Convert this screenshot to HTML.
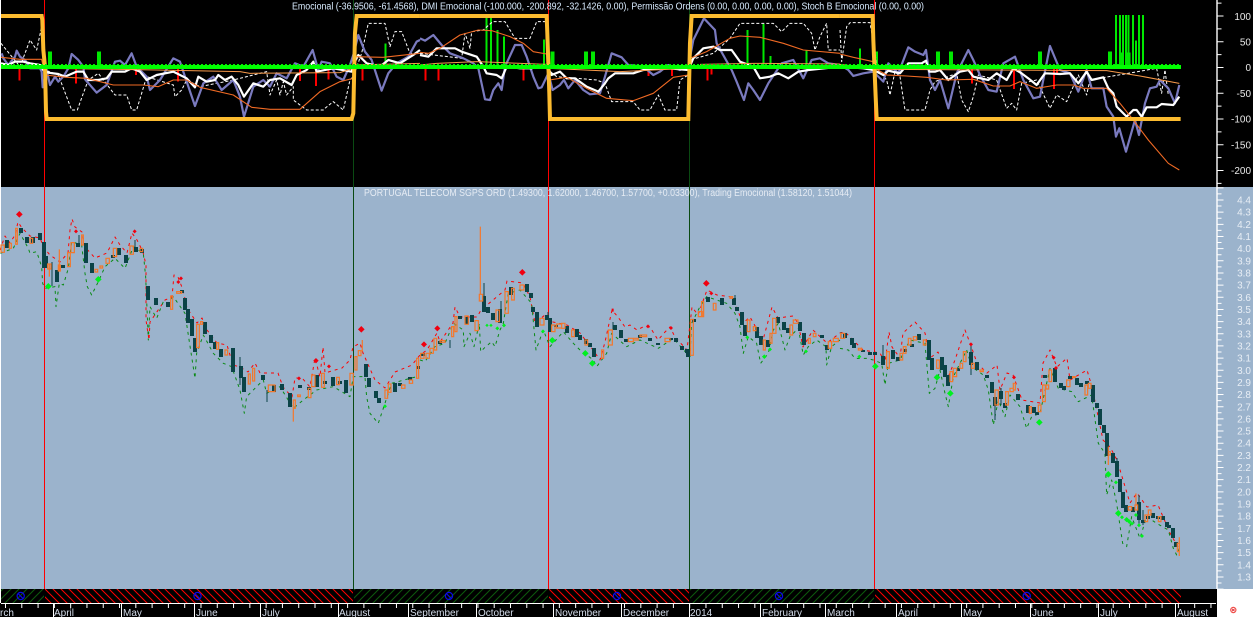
<!DOCTYPE html>
<html><head><meta charset="utf-8"><title>Chart</title>
<style>
html,body{margin:0;padding:0;background:#fff}
svg{display:block}
text{font-family:"Liberation Sans",sans-serif}
.n *{vector-effect:non-scaling-stroke}
.l{fill:none;stroke-linejoin:round}
.pa text{font-size:10px;fill:#e8eef5;text-anchor:end}
.ta text{font-size:10px;fill:#e8e8e8;text-anchor:end}
.m text{font-size:10px;fill:#d4dcea}
</style></head>
<body>
<svg width="1253" height="617" viewBox="0 0 1253 617" xmlns="http://www.w3.org/2000/svg">
<defs>
<pattern id="hr" width="8" height="8" patternUnits="userSpaceOnUse"><path d="M-1 -1L9 9M-1 7L1 9M7 -1L9 1" stroke="#f00" stroke-width="1"/></pattern>
<pattern id="hg" width="8" height="8" patternUnits="userSpaceOnUse"><path d="M-1 9L9 -1M-1 1L1 -1M7 9L9 7" stroke="#0c5a0c" stroke-width="1"/></pattern>
</defs>
<rect width="1253" height="617" fill="#fff"/>
<rect x="1" y="0" width="1252" height="187" fill="#000"/>
<rect x="1" y="187" width="1252" height="402" fill="#9bb3cc"/>
<rect x="1" y="589" width="1216" height="28" fill="#000"/>
<rect x="0" y="603" width="1" height="14" fill="#000"/>

<!-- vertical markers -->
<path d="M44.5 0V589M548.5 0V589M874.5 0V589" stroke="#f00" stroke-width="1"/>
<path d="M353.5 0V589M689.5 0V589" stroke="#0a4a12" stroke-width="1"/>

<!-- top pane: bars -->
<g class="n" shape-rendering="crispEdges">
<g transform="scale(.3333)">
<path d="M150 200V155M297 200V155" stroke="#00e800" stroke-width="4"/>
<path d="M1157 200V130" stroke="#00e800" stroke-width="2"/>
<path d="M58 207V242M228 207V250M408 207V225M534 207V245M900 207V243M948 207V258M986 207V238M1087 207V242" stroke="#f00" stroke-width="2"/>
</g>
<g transform="translate(420 0) scale(.3333)">
<path d="M398 200V155M498 200V155M519 200V155" stroke="#00e800" stroke-width="4"/>
<path d="M200 200V45M213 200V45" stroke="#00e800" stroke-width="2"/>
<path d="M233 200V90M252 200V110M372 200V118M983 200V90M1031 200V72M1052 200V168M1160 200V152" stroke="#00e800" stroke-width="2"/>
<path d="M16 207V242M55 207V242M310 207V242M686 207V228M756 207V228M862 207V242M875 207V223" stroke="#f00" stroke-width="2"/>
</g>
<g transform="translate(840 0) scale(.3333)">
<path d="M108 200V155M294 200V155M333 200V155M600 200V155M810 200V155M843 200V158M866 200V158" stroke="#00e800" stroke-width="4"/>
<path d="M828 200V45M840 200V45M849 200V45M858 200V45M866 200V45M879 200V45M897 200V45M909 200V45" stroke="#00e800" stroke-width="2"/>
<path d="M60 200V145M888 200V122" stroke="#00e800" stroke-width="2"/>
<path d="M396 207V250M522 207V267M642 207V267M651 207V225" stroke="#f00" stroke-width="2"/>
</g>
</g>
<g class="n">
<!-- white dashed -->
<g class="l" stroke="#fff" stroke-width="1" stroke-dasharray="3 2">
<polyline transform="scale(.3333)" points="3,130 60,200 90,120 110,150 125,80 135,200 135,210 175,225 215,330 232,330 250,280 265,240 295,220 345,285 380,285 395,330 410,330 440,230 520,255 525,290 545,270 560,240 600,260 700,240 800,215 810,285 830,240 840,285 850,245 860,285 880,260 880,300 920,330 970,330 975,325 1000,305 1030,330 1050,240 1060,230 1085,160 1105,70 1155,70 1170,140 1185,95 1205,95 1230,160 1260,160"/>
<polyline transform="translate(420 0) scale(.3333)" points="0,160 125,175 135,100 150,145 155,95 190,90 218,65 255,65 285,115 330,115 350,65 380,65 385,210 410,230 530,240 555,250 575,305 640,305 660,330 690,330 715,285 735,330 770,330 780,240 805,225 810,180 880,160 930,115 960,70 1060,70 1085,95 1110,70 1150,70 1175,100 1185,150 1200,110 1220,70 1225,150 1260,150"/>
<polyline transform="translate(840 0) scale(.3333)" points="0,90 5,185 20,80 30,68 90,68 105,155 110,205 140,240 150,285 165,215 180,230 195,330 255,330 270,270 285,245 350,220 365,300 385,335 400,290 415,225 470,240 500,325 515,310 530,330 545,250 590,240 630,325 650,285 680,305 715,225 740,285 750,240 950,205 965,280 975,210 985,285"/>
</g>

<!-- blue line -->
<g class="l" stroke="#7a7abf" stroke-width="2.2">
<polyline transform="scale(.3333)" points="5,160 10,175 25,195 45,170 50,152 60,170 75,180 90,205 120,205 125,215 128,262 140,210 150,255 165,230 175,245 190,230 205,205 215,162 235,180 250,200 255,238 290,278 320,255 345,185 360,182 375,195 395,160 410,200 440,230 450,270 480,240 520,175 540,185 555,230 585,318 610,250 640,230 665,270 700,240 720,290 732,350 760,260 790,240 810,260 830,220 860,235 885,190 910,200 938,150 955,210 965,185 990,190 1010,230 1030,240 1050,195 1060,165 1075,105 1095,155 1115,180 1145,272 1165,220 1190,190 1225,170 1250,125 1260,120"/>
<polyline transform="translate(420 0) scale(.3333)" points="0,115 15,122 40,105 65,135 90,160 130,175 160,190 175,205 195,298 210,300 220,270 235,250 245,270 255,200 285,135 305,135 320,170 340,230 355,265 365,262 385,220 398,270 420,255 432,240 445,265 465,240 490,270 510,283 540,280 555,230 575,160 605,172 625,195 670,200 700,225 720,215 745,195 780,210 805,200 820,120 852,55 885,90 890,130 935,210 950,245 972,300 985,250 1000,270 1020,300 1045,250 1085,190 1120,180 1150,235 1175,180 1200,175 1225,190 1260,195"/>
<polyline transform="translate(840 0) scale(.3333)" points="0,195 25,210 40,228 70,220 100,215 130,245 145,190 175,220 205,142 225,155 250,165 258,150 270,240 285,270 300,240 325,325 350,220 385,150 400,180 420,225 445,270 470,275 490,190 525,170 550,240 580,295 600,290 630,138 660,210 690,220 715,275 740,210 755,265 790,265 800,320 820,350 828,410 838,385 858,455 885,360 897,405 915,310 930,265 950,260 960,240 985,265 1005,310 1018,255"/>
</g>

<!-- white solid -->
<g class="l" stroke="#fff" stroke-width="2.2">
<polyline transform="scale(.3333)" points="3,190 25,195 45,185 70,185 90,190 120,195 130,210 145,218 175,222 195,230 230,215 250,215 265,240 295,240 320,235 335,215 375,215 395,205 420,215 440,240 470,225 520,215 560,235 585,262 595,230 620,245 645,240 655,225 675,240 695,230 715,255 732,290 760,250 790,260 810,240 840,235 875,255 890,225 920,210 940,185 950,215 1000,205 1055,215 1062,190 1075,165 1100,190 1140,200 1165,180 1200,190 1240,165 1260,150"/>
<polyline transform="translate(420 0) scale(.3333)" points="0,165 25,170 50,145 105,145 125,155 170,170 190,200 200,220 230,225 245,235 260,200 300,205 335,205 350,200 385,205 395,225 420,215 440,235 465,235 500,260 535,275 555,250 565,235 585,220 640,220 670,210 720,205 745,205 805,210 820,175 850,145 880,140 900,150 935,150 960,185 1000,200 1020,235 1050,230 1075,220 1105,235 1135,215 1165,210 1260,200"/>
<polyline transform="translate(840 0) scale(.3333)" points="0,200 70,205 100,210 130,225 145,212 180,220 205,190 245,190 258,182 268,215 285,215 300,210 325,240 360,215 385,210 400,230 445,240 470,220 500,240 520,205 545,220 565,235 590,255 615,220 660,222 690,220 715,250 740,215 755,240 790,232 805,265 820,280 830,320 860,350 880,330 890,330 905,350 920,322 950,322 965,312 1000,315 1018,290"/>
</g>

<!-- thin orange -->
<g class="l" stroke="#f06a24" stroke-width="1.1">
<polyline transform="scale(.3333)" points="3,172 60,178 125,178 135,225 200,232 260,235 340,255 385,255 430,255 475,260 520,240 560,240 600,262 700,285 755,322 810,328 900,328 960,275 1020,245 1060,235 1065,170 1150,172 1260,160"/>
<polyline transform="translate(420 0) scale(.3333)" points="0,157 25,160 60,145 120,105 175,90 215,92 270,110 310,130 340,155 380,162 388,240 440,232 500,265 560,295 640,302 700,280 760,232 805,225 810,175 860,155 930,115 960,108 1020,112 1090,130 1150,150 1260,160"/>
<polyline transform="translate(840 0) scale(.3333)" points="0,162 40,172 100,185 105,205 140,225 200,228 260,232 320,240 400,238 460,258 510,258 540,245 590,265 650,255 700,255 730,265 800,265 840,310 880,360 925,420 985,490 1018,510"/>
</g>
<g class="l" stroke="#f89a4a" stroke-width="1">
<path transform="scale(.3333)" d="M140 205L280 207 470 210 720 215 750 220 1020 218 1060 205M1065 195L1260 190"/>
<path transform="translate(420 0) scale(.3333)" d="M0 195L50 190 170 185 380 193M390 205L600 215 805 205M840 193L1000 190 1260 192"/>
<path transform="translate(840 0) scale(.3333)" d="M0 193L100 205M110 208L800 212 900 228 1018 250"/>
</g>
</g>

<!-- thick orange -->
<g fill="none" stroke="#fcbb2f" stroke-width="4" stroke-linejoin="miter" class="n">
<polyline transform="scale(.3333)" points="3,48 125,48 127,60 130,150 135,200 138,335 140,357 1055,357 1060,340 1065,100 1070,48 1260,48"/>
<polyline transform="translate(420 0) scale(.3333)" points="0,48 380,48 382,100 388,280 390,357 805,357 810,130 815,48 1260,48"/>
<polyline transform="translate(840 0) scale(.3333)" points="0,48 98,48 100,120 107,290 110,357 1022,357"/>
</g>

<!-- zero line -->
<path d="M1 67H1181" stroke="#00ff00" stroke-width="4"/>
<path d="M1 64.5H1181" stroke="#00e800" stroke-width="1" stroke-dasharray="2 2"/>

<!-- header text -->
<text x="292" y="9.5" font-size="10" fill="#d9ecff" textLength="632" lengthAdjust="spacingAndGlyphs">Emocional (-36.9506, -61.4568), DMI Emocional (-100.000, -200.892, -32.1426, 0.00), Permissão Ordens (0.00, 0.00, 0.00, 0.00), Stoch B Emocional (0.00, 0.00)</text>
<text x="364" y="196" font-size="10" fill="#e6ecf4" textLength="488" lengthAdjust="spacingAndGlyphs">PORTUGAL TELECOM SGPS ORD (1.49300, 1.62000, 1.46700, 1.57700, +0.03300), Trading Emocional (1.58120, 1.51044)</text>

<!-- bands -->
<g class="n l">
<g stroke="#f00" stroke-width="1" stroke-dasharray="3 4">
<polyline points="0,250 5,236 10,243 15,235 18,222 22,228 30,236 40,238 44,248 50,255 60,262 68,253 70,230 72,219 75,227 82,232 85,247 95,258 107,253 115,237 120,245 127,253 132,233 137,240 143,252 146,265 146,320 149,340 150,322 165,300 172,297 174,275 178,277 183,290 187,308 197,323 202,318 207,330 217,343 227,345 233,365 240,367 248,372 255,363 260,373 270,373 278,373 283,387 292,397 295,378 302,378 310,387 315,358 320,377 323,347 325,373 342,368 350,360 353,347 360,343 363,353 375,380 385,388 395,372 412,365 420,355 427,350 437,333 440,342 453,323 455,307 460,317 477,317 481,310 505,290 507,281 523,283 530,297 535,323 545,315 553,322 567,325 580,333 593,350 600,360 605,342 612,310 618,317 625,327 630,325 637,330 643,327 650,327 658,340 665,332 670,327 675,337 687,350 692,307 698,315 707,290 717,295 732,297 743,323 750,317 763,340 772,307 778,318 793,316 798,323 803,347 813,330 827,343 840,333 845,332 853,340 863,350 880,353 885,363 889,332 892,347 900,358 903,333 915,322 925,333 930,358 938,352 943,363 947,380 955,360 965,330 970,343 977,363 987,373 997,365 1000,390 1007,373 1013,375 1022,400 1040,403 1043,363 1050,350 1057,367 1067,358 1070,380 1087,370 1092,387 1103,440 1110,447 1117,460 1130,503 1137,493 1147,507 1158,505 1170,533 1178,547"/>
</g>
<g stroke="#0a8a14" stroke-width="1" stroke-dasharray="3 4">
<polyline transform="translate(0 190) scale(.3333)" points="1,190 40,175 60,130 85,175 90,190 110,185 125,230 128,280 135,295 165,290 168,350 178,280 190,285 205,235 215,155 245,165 255,250 262,290 275,315 295,275 315,230 345,205 375,235 400,170 430,190 437,260 445,450 450,350 470,385 490,335 505,340 520,320 555,370 575,500 585,565 590,490 610,435 640,490 670,520 695,530 720,600 733,670 740,620 790,570 800,610 840,590 880,655 910,630 950,600 1000,590 1050,620 1060,560 1095,560 1100,620 1110,670 1135,700 1155,640 1175,580 1250,560"/>
<polyline transform="translate(420 190) scale(.3333)" points="0,510 15,515 45,470 75,460 100,400 130,420 132,470 150,430 162,470 178,400 182,485 195,472 215,455 225,470 240,420 250,400 258,350 265,310 300,300 335,340 348,480 370,420 390,470 430,425 460,460 480,480 520,510 530,530 560,490 575,430 620,470 660,450 715,475 760,445 800,490 810,500 815,400 840,350 860,320 920,340 945,370 960,410 970,490 985,440 1010,460 1022,520 1045,490 1060,420 1075,400 1095,480 1110,440 1135,415 1150,495 1165,470 1190,450 1218,470 1220,525 1235,470 1260,450"/>
<polyline transform="translate(840 300) scale(.3333)" points="0,145 25,150 45,175 80,175 100,180 125,190 135,255 145,190 180,180 210,120 255,130 268,280 285,265 300,210 315,280 325,320 340,230 380,150 395,200 430,225 445,270 460,375 475,300 495,350 510,285 540,320 560,385 575,350 600,340 630,205 655,265 695,275 715,305 755,285 775,430 795,460 800,585 815,540 830,610 848,730 860,740 875,650 900,715 920,650 950,670 985,690 1000,745 1010,765 1020,740"/>
</g>
</g>

<!-- dark candles -->
<path shape-rendering="crispEdges" fill="none" stroke="#0b4347" stroke-width="4" d="M7 240V248M21 228V233M27 237V243M33 237V243M40 233V240M44 242V268M46 256V268M57 270V282M63 265V268M78 243V247M86 243V263M92 263V273M113 255V258M119 248V255M126 255V263M136 247V252M142 249V253M148 286V300M156 298V305M168 302V307M182 290V293M185 298V310M188 309V323M192 319V336M195 338V352M205 322V334M211 335V343M215 342V349M221 349V357M233 348V372M241 366V378M244 377V392M263 375V380M274 385V392M282 384V390M290 393V407M300 385V388M309 387V390M317 375V387M325 381V384M333 377V386M340 381V384M346 380V393M366 364V377M369 378V387M376 391V398M379 398V403M395 383V392M400 383V386M410 377V380M418 366V369M423 353V356M440 341V344M460 316V319M467 317V324M472 315V322M484 296V312M488 307V313M493 313V320M500 309V323M511 287V295M527 284V292M531 293V298M533 307V312M537 312V327M547 315V320M550 318V332M556 325V327M567 326V333M577 329V337M580 335V340M586 339V344M590 343V347M594 348V357M615 325V330M621 330V338M626 339V342M640 335V338M650 338V341M658 343V345M671 338V340M676 338V342M682 346V350M687 349V353M688 350V357M694 319V322M708 297V302M722 298V305M734 298V305M737 307V311M742 312V325M745 325V336M757 327V338M761 336V345M768 340V347M778 317V323M784 322V330M788 328V333M800 322V331M804 333V345M822 335V338M827 345V350M845 333V338M852 338V345M854 343V348M863 350V352M870 352V355M875 352V355M883 356V365M893 350V359M898 357V361M905 349V352M912 344V347M919 334V340M929 340V360M932 358V370M942 357V370M945 365V377M948 375V386M958 368V371M971 352V365M977 362V370M987 375V378M992 382V393M995 397V406M1001 391V399M1005 403V408M1018 394V400M1028 405V413M1034 407V413M1037 412V415M1045 375V378M1055 368V382M1061 383V388M1064 386V390M1070 376V379M1077 378V385M1081 383V387M1087 381V384M1093 385V402M1097 403V408M1100 409V425M1104 425V433M1107 433V456M1113 453V463M1117 461V477M1120 479V492M1123 492V508M1126 505V512M1133 507V512M1139 502V520M1143 520V523M1148 516V519M1153 513V518M1158 516V519M1163 516V520M1167 522V527M1169 525V528M1173 528V538M1176 542V547"/>
<path fill="none" stroke="#0b4347" stroke-width="1" d="M52 262V286M79 235V243M135 240V248M267 390V402M240 357V385M450 340V348M484 283V296M501 301V320M548 312V318M613 322V330M735 295V300M841 332V338M883 345V356M1001 388V405M995 390V420M971 345V375M1117 458V470M1139 495V525M1143 510V525"/>

<!-- orange candles -->
<g class="n" fill="none" stroke="#f4772a" stroke-width="1.2">
<path transform="translate(0 190) scale(.3333)" d="M3 165h10v22h-10zM28 160h6v15h-6zM47 115h5v48h-5zM90 145h8v15h-8zM143 222h10v15h-10zM175 225h6v18h-6zM203 188h8v42h-8zM213 158h10v30h-10zM245 135h5v30h-5zM285 238h8v8h-8zM300 228h8v6h-8zM318 205h10v15h-10zM340 175h10v25h-10zM390 168h10v25h-10zM420 175h8v10h-8zM512 318h6v40h-6zM530 305h15v5h-15zM590 403h8v70h-8zM602 395h6v8h-6zM650 458h6v20h-6zM675 480h8v15h-8zM745 552h6v30h-6zM758 535h6v38h-6zM805 585h20v20h-20zM880 630h6v25h-6zM893 615h8v5h-8zM925 595h8v28h-8zM935 555h10v35h-10zM965 550h8v42h-8zM1010 562h8v22h-8zM1050 550h10v35h-10zM1065 500h6v40h-6zM1075 482h8v15h-8zM1155 600h8v25h-8zM1165 582h8v25h-8zM1205 585h10v10h-10zM1228 570h10v10h-10zM1250 505h6v60h-6zM178 178V243M880 630V695M148 222V260M1087 450V485"/>
<path transform="translate(420 190) scale(.3333)" d="M2 490h10v15h-10zM18 490h10v15h-10zM30 475h10v15h-10zM42 445h8v35h-8zM60 452h15v5h-15zM95 410h6v30h-6zM105 380h6v45h-6zM135 378h10v25h-10zM165 392h10v30h-10zM178 313h10v20h-10zM228 360h10v35h-10zM255 305h10v65h-10zM275 295h8v35h-8zM300 285h12v15h-12zM360 385h12v20h-12zM395 405h10v20h-10zM410 402h15v12h-15zM425 400h10v15h-10zM455 420h8v20h-8zM495 450h8v15h-8zM545 480h6v25h-6zM565 420h12v45h-12zM625 445h15v10h-15zM640 445h15v5h-15zM660 435h20v5h-20zM735 445h15v10h-15zM812 388h8v108h-8zM835 365h12v15h-12zM845 335h6v45h-6zM880 340h8v20h-8zM930 320h8v5h-8zM982 390h8v35h-8zM1000 410h8v12h-8zM1030 450h6v30h-6zM1050 430h6v30h-6zM1058 385h10v45h-10zM1110 405h8v30h-8zM1120 390h14v10h-14zM1165 445h6v15h-6zM1180 430h8v10h-8zM1225 455h10v20h-10zM1240 445h15v10h-15zM181 110V313"/>
<path transform="translate(840 300) scale(.3333)" d="M2 100h12v15h-12zM55 145h10v5h-10zM140 155h8v50h-8zM180 160h8v20h-8zM190 140h8v20h-8zM205 115h8v20h-8zM220 110h10v10h-10zM250 120h8v15h-8zM290 180h8v25h-8zM330 215h8v30h-8zM340 205h10v25h-10zM360 190h8v15h-8zM370 155h8v30h-8zM395 190h8v15h-8zM420 210h10v5h-10zM465 270h10v45h-10zM497 275h8v40h-8zM510 265h10v10h-10zM520 250h6v20h-6zM568 320h6v20h-6zM595 315h8v20h-8zM608 255h8v50h-8zM618 255h8v12h-8zM627 210h8v35h-8zM680 240h10v20h-10zM698 230h8v3h-8zM735 255h8v30h-8zM745 250h8v15h-8zM805 455h6v10h-6zM865 620h10v10h-10zM885 615h8v15h-8zM915 645h8v20h-8zM925 630h8v15h-8zM955 650h8v15h-8zM1012 730h6v25h-6zM1018 712V768M888 580V615M805 440V495"/>
</g>

<!-- diamonds -->
<g fill="#f00010">
<path transform="translate(0 190) scale(.3333)" d="M58 63l10 10-10 10-10-10zM228 118l6 6-6 6-6-6zM404 118l6 6-6 6-6-6zM535 270l6 6-6 6-6-6zM543 259l6 6-6 6-6-6zM897 559l6 6-6 6-6-6zM948 504l8 8-8 8-8-8zM987 523l6 6-6 6-6-6zM1084 408l10 10-10 10-10-10z"/>
<path transform="translate(420 190) scale(.3333)" d="M12 454l9 9-9 9-9-9zM52 406l9 9-9 9-9-9zM307 237l10 10-10 10-10-10zM859 270l10 10-10 10-10-10zM874 304l6 6-6 6-6-6zM684 403l6 6-6 6-6-6zM753 408l6 6-6 6-6-6zM575 356h6v9h-6z"/>
<path transform="translate(840 300) scale(.3333)" d="M393 127l6 6-6 6-6-6zM522 226l6 6-6 6-6-6zM641 167l6 6-6 6-6-6zM648 198l6 6-6 6-6-6z"/>
</g>
<g fill="#00f020">
<path transform="translate(0 190) scale(.3333)" d="M145 279l10 10-10 10-10-10zM295 258l10 10-10 10-10-10zM1155 643l6 6-6 6-6-6z"/>
<path transform="translate(420 190) scale(.3333)" d="M201 401l5 5-5 5-5-5zM213 401l5 5-5 5-5-5zM232 409l6 6-6 6-6-6zM252 400l6 6-6 6-6-6zM369 418l6 6-6 6-6-6zM397 441l10 10-10 10-10-10zM496 480l10 10-10 10-10-10zM517 510l10 10-10 10-10-10zM982 436l6 6-6 6-6-6zM1033 493l7 7-7 7-7-7zM1050 472l6 6-6 6-6-6zM1158 478l6 6-6 6-6-6z"/>
<path transform="translate(840 300) scale(.3333)" d="M58 164l6 6-6 6-6-6zM106 189l10 10-10 10-10-10zM291 222l10 10-10 10-10-10zM331 270l10 10-10 10-10-10zM598 357l10 10-10 10-10-10zM805 513l10 10-10 10-10-10zM828 541l6 6-6 6-6-6zM835 630l10 10-10 10-10-10zM846 646l6 6-6 6-6-6zM860 651l8 8-8 8-8-8zM868 658l7 7-7 7-7-7zM876 665l6 6-6 6-6-6zM897 670l6 6-6 6-6-6zM888 639l6 6-6 6-6-6zM906 702l6 6-6 6-6-6z"/>
</g>

<!-- hatch band -->
<rect x="1" y="589" width="1216" height="14" fill="#000"/>
<rect x="1" y="589" width="43" height="14" fill="url(#hg)"/>
<rect x="45" y="589" width="308" height="14" fill="url(#hr)"/>
<rect x="354" y="589" width="194" height="14" fill="url(#hg)"/>
<rect x="549" y="589" width="140" height="14" fill="url(#hr)"/>
<rect x="690" y="589" width="184" height="14" fill="url(#hg)"/>
<rect x="875" y="589" width="306" height="14" fill="url(#hr)"/>
<path d="M44.5 589V603M548.5 589V603M874.5 589V603" stroke="#000" stroke-width="1"/>
<g fill="none" stroke="#0a0ae6" stroke-width="1.2">
<circle cx="20.7" cy="596" r="3.6"/><path d="M18.5 594l4.4 4.4"/>
<circle cx="197.5" cy="596" r="3.6"/><path d="M195.3 594l4.4 4.4"/>
<circle cx="449" cy="596" r="3.6"/><path d="M446.8 594l4.4 4.4"/>
<circle cx="617" cy="596" r="3.6"/><path d="M614.8 594l4.4 4.4"/>
<circle cx="779" cy="596" r="3.6"/><path d="M776.8 594l4.4 4.4"/>
<circle cx="1026.7" cy="596" r="3.6"/><path d="M1024.5 594l4.4 4.4"/>
</g>

<!-- x axis -->
<path d="M1 603.5H1216" stroke="#fff" stroke-width="1"/>
<line x1="5" y1="606" x2="1216" y2="606" stroke="#fff" stroke-width="4" stroke-dasharray="1 15.29"/>
<path d="M53.5 603V617M121.5 603V617M194.5 603V617M260.5 603V617M338.5 603V617M408.5 603V617M476.5 603V617M553.5 603V617M621.5 603V617M689.5 603V617M760.5 603V617M825.5 603V617M896.5 603V617M961.5 603V617M1030.5 603V617M1098.5 603V617M1175.5 603V617" stroke="#fff" stroke-width="1"/>
<g class="m">
<text x="0" y="616">rch</text><text x="54" y="616">April</text><text x="123" y="616">May</text><text x="196" y="616">June</text><text x="262" y="616">July</text><text x="339" y="616">August</text><text x="410" y="616">September</text><text x="478" y="616">October</text><text x="555" y="616">November</text><text x="623" y="616">December</text><text x="690" y="616">2014</text><text x="762" y="616">February</text><text x="827" y="616">March</text><text x="898" y="616">April</text><text x="963" y="616">May</text><text x="1032" y="616">June</text><text x="1100" y="616">July</text><text x="1177" y="616">August</text>
</g>

<!-- right axis -->
<path d="M1217 0V589" stroke="#fff" stroke-width="1.4"/>
<line x1="1220.5" y1="-10.25" x2="1220.5" y2="187" stroke="#fff" stroke-width="6" stroke-dasharray="1 24.75"/>
<line x1="1219.5" y1="2.6" x2="1219.5" y2="187" stroke="#fff" stroke-width="4" stroke-dasharray="1 24.75"/>
<line x1="1220.5" y1="187.34" x2="1220.5" y2="589" stroke="#fff" stroke-width="6" stroke-dasharray="1 11.16"/>
<line x1="1219.5" y1="193.4" x2="1219.5" y2="589" stroke="#fff" stroke-width="4" stroke-dasharray="1 11.16"/>
<g class="ta">
<text x="1251" y="20">100</text><text x="1251" y="45.5">50</text><text x="1251" y="71">0</text><text x="1251" y="97">-50</text><text x="1251" y="122.5">-100</text><text x="1251" y="148.5">-150</text><text x="1251" y="174">-200</text>
</g>
<g class="pa">
<text x="1251" y="203.5">4.4</text><text x="1251" y="215.7">4.3</text><text x="1251" y="227.9">4.2</text><text x="1251" y="240">4.1</text><text x="1251" y="252.2">4.0</text><text x="1251" y="264.3">3.9</text><text x="1251" y="276.5">3.8</text><text x="1251" y="288.7">3.7</text><text x="1251" y="300.8">3.6</text><text x="1251" y="313">3.5</text><text x="1251" y="325.1">3.4</text><text x="1251" y="337.3">3.3</text><text x="1251" y="349.5">3.2</text><text x="1251" y="361.6">3.1</text><text x="1251" y="373.8">3.0</text><text x="1251" y="385.9">2.9</text><text x="1251" y="398.1">2.8</text><text x="1251" y="410.3">2.7</text><text x="1251" y="422.4">2.6</text><text x="1251" y="434.6">2.5</text><text x="1251" y="446.7">2.4</text><text x="1251" y="458.9">2.3</text><text x="1251" y="471.1">2.2</text><text x="1251" y="483.2">2.1</text><text x="1251" y="495.4">2.0</text><text x="1251" y="507.5">1.9</text><text x="1251" y="519.7">1.8</text><text x="1251" y="531.9">1.7</text><text x="1251" y="544">1.6</text><text x="1251" y="556.2">1.5</text><text x="1251" y="568.3">1.4</text><text x="1251" y="580.5">1.3</text>
</g>

<!-- corner icon -->
<circle cx="1233.3" cy="610" r="2.6" fill="#fff" stroke="#f0504a" stroke-width="1.2"/>
<path d="M1232 608.8l2.6 2.4M1234.6 608.8l-2.6 2.4" stroke="#e0202a" stroke-width=".8"/>
</svg>
</body></html>
